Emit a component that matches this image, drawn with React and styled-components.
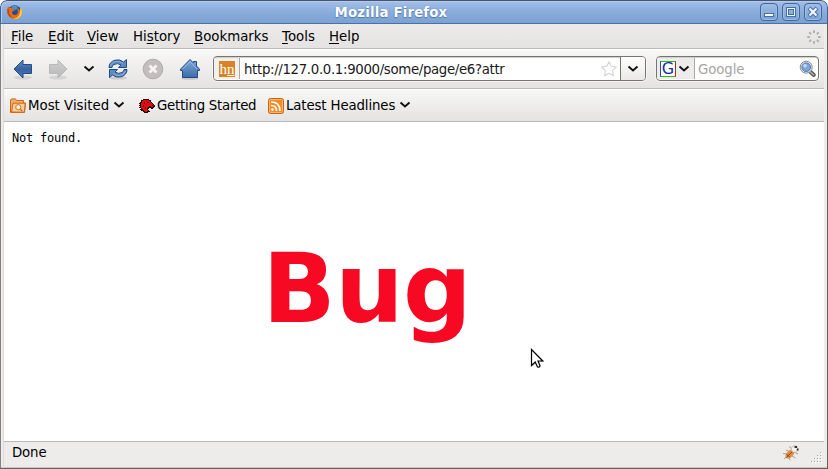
import React from 'react';
import styled, { createGlobalStyle } from 'styled-components';

const Global = createGlobalStyle`
  * { box-sizing: border-box; }
  html, body { margin: 0; background: #fff; overflow: hidden; }
  svg { display: block; flex: none; }
`;

const Frame = styled.div`
  position: relative;
  width: 828px;
  height: 469px;
  display: flex;
  flex-direction: column;
  overflow: hidden;
  border-radius: 7px 7px 0 0;
  background: #edeceb;
  font-family: "DejaVu Sans", sans-serif;
  font-size: 13.33px;
  color: #000;
`;

const TitleBar = styled.header`
  height: 24px;
  flex: none;
  display: flex;
  align-items: center;
  padding: 0 6px 0 5px;
  border: 1px solid #3f5f8d;
  border-top-color: #47566c;
  border-bottom-color: #4a70a8;
  border-radius: 7px 7px 0 0;
  background: linear-gradient(#a4c1e8, #96b5e2 25%, #88abd9 55%, #7ca2d2);
  box-shadow: inset 1px 1px 0 #b1caed;
`;

const Title = styled.h1`
  flex: 1;
  margin: 0;
  padding-top: 1px;
  padding-right: 1px;
  text-align: center;
  font-size: 13.33px;
  line-height: 22px;
  letter-spacing: 0.16px;
  color: #fff;
  text-shadow: 0 1px 1px #4e77b0, 0 0 1px #4e77b0;
`;

const WindowButtons = styled.div`
  display: flex;
  gap: 4px;
  margin-right: -1px;
`;

const WindowButton = styled.button`
  width: 18px;
  height: 18px;
  padding: 0;
  border: 1px solid #41689e;
  border-radius: 4px;
  background: linear-gradient(#9fbde6, #7ba1d2);
  box-shadow: inset 0 0 0 1px #a0bde4;
`;

const Body = styled.div`
  flex: 1;
  min-height: 0;
  display: flex;
  flex-direction: column;
  padding: 0 3px 0 2px;
  border: solid #65625e;
  border-width: 0 1px 1px 1px;
  border-left-color: #85827e;
  box-shadow: inset 0 -1px 0 #c9c6c3;
`;

const Inner = styled.div`
  flex: 1;
  min-height: 0;
  display: flex;
  flex-direction: column;
  border-left: 1px solid #dedcda;
`;

const Bar = styled.div`
  flex: none;
  display: flex;
  align-items: center;
  height: ${(p) => p.$h}px;
  border-bottom: 1px solid #bcbab8;
  background: linear-gradient(${(p) => p.$from || '#f8f8f7'}, #e4e3e1);
  box-shadow: inset 0 1px 0 ${(p) => p.$from || '#fff'};
`;

const MenuItem = styled.div`
  width: ${(p) => p.$w}px;
  flex: none;
  padding-top: 2px;
  line-height: 22px;
  white-space: nowrap;
  &:first-child { margin-left: 7px; }
`;

const Key = styled.span`
  text-decoration: underline;
  text-underline-offset: 2px;
  text-decoration-thickness: 1px;
  text-decoration-skip-ink: none;
`;

const Throbber = styled.div`
  margin-left: auto;
  margin-right: 2px;
  padding-top: 1px;
`;

const NavButton = styled.div`
  width: ${(p) => p.$w}px;
  flex: none;
  display: flex;
  justify-content: center;
`;

const Field = styled.div`
  height: 25px;
  width: ${(p) => p.$w}px;
  margin-left: ${(p) => p.$gap}px;
  flex: none;
  display: flex;
  align-items: center;
  overflow: hidden;
  border: 1px solid #777571;
  border-radius: 4px;
  background: #fff;
  box-shadow: 0 0 0 1px #f5f4f3, inset 0 1px 0 #d0cfcd;
`;

const FieldLead = styled.div`
  width: ${(p) => p.$w}px;
  height: 21px;
  flex: none;
  display: flex;
  align-items: center;
  border-right: 1px solid #aaa8a5;
  background: ${(p) => p.$bg || '#f1f0ef'};
  padding-left: ${(p) => p.$pad}px;
  gap: 2px;
`;

const FieldText = styled.div`
  flex: 1;
  padding-left: ${(p) => p.$pad}px;
  padding-top: 2px;
  color: ${(p) => p.$color};
  letter-spacing: ${(p) => p.$ls}px;
  line-height: 21px;
  white-space: nowrap;
`;

const DropButton = styled.div`
  width: 25px;
  height: 23px;
  margin-left: 2px;
  display: flex;
  align-items: center;
  justify-content: center;
  border-left: 1px solid #777571;
  background: linear-gradient(#fff, #eae9e7);
`;

const Favicon = styled.div`
  width: 16px;
  height: 16px;
  background: #d98324;
  color: #fff;
  font: 15px/16px "Liberation Serif", serif;
  text-align: center;
`;

const Bookmark = styled.div`
  display: flex;
  align-items: center;
  flex: none;
  width: ${(p) => p.$w}px;
  gap: 2px;
  white-space: nowrap;
  letter-spacing: ${(p) => p.$ls}px;
  &:first-child { margin-left: 6px; }
`;

const BookmarkIcon = styled.div`
  padding-top: ${(p) => p.$drop || 0}px;
`;

const BookmarkLabel = styled.span`
  margin-right: ${(p) => p.$end || 0}px;
`;

const Page = styled.main`
  position: relative;
  flex: 1;
  min-height: 0;
  background: #fff;
`;

const Message = styled.pre`
  margin: 0;
  padding: 9px 8px;
  font: 12px/14px "DejaVu Sans Mono", monospace;
  letter-spacing: -0.22px;
`;

const Annotation = styled.div`
  position: absolute;
  left: 258.5px;
  top: 110px;
  font-size: 96px;
  line-height: 114px;
  letter-spacing: -0.5px;
  font-weight: bold;
  color: #f70823;
`;

const Pointer = styled.svg`
  position: absolute;
  left: 526px;
  top: 226px;
`;

const Status = styled.footer`
  height: 27px;
  flex: none;
  display: flex;
  align-items: center;
  padding: 0 2px 4px 8px;
  border-top: 1px solid #bcbab8;
  line-height: 20px;
  letter-spacing: -0.15px;
`;

const Bug = styled.div`
  margin-left: auto;
  margin-right: 10px;
`;

const GripBox = styled.div`
  padding-top: 10px;
`;

const Chevron = () => (
  <svg width="12" height="8" viewBox="0 0 12 8">
    <path d="M1.5 1.5 L6 5.5 L10.5 1.5" fill="none" stroke="#111" strokeWidth="1.9" />
  </svg>
);

const FirefoxIcon = () => (
  <svg width="17" height="17" viewBox="0 0 17 17">
    <circle cx="8.5" cy="8" r="6.8" fill="#244d93" />
    <path d="M5 3 Q8 0 12 3 L10 6 L7 5Z" fill="#4b91d2" />
    <path d="M2 2 L4 4 Q6 3 7 5 L9 6 L6 8 Q6 11 9 11 Q12 11 12 7 L11 4 Q14 5 14 8 L14.5 3 Q18 9 14 13 Q10 17 5 14 Q-1 11 2 2Z" fill="#e66b16" />
    <path d="M14.5 3 Q18 9 14 13 Q11 16 7 15 Q13 14 14 8Z" fill="#ffcb3a" />
    <path d="M2 5 Q1 10 5 13" stroke="#a83218" fill="none" />
  </svg>
);

const ArrowIcon = ({ forward }) => (
  <svg width="22" height="24" viewBox="0 0 22 24">
    <defs>
      <linearGradient id="blueArrow" x2="0" y2="1"><stop stopColor="#6792c6" /><stop offset=".5" stopColor="#36629f" /><stop offset="1" stopColor="#4c7cb8" /></linearGradient>
      <linearGradient id="grayArrow" x2="0" y2="1"><stop stopColor="#d0d0cf" /><stop offset="1" stopColor="#b7b8b9" /></linearGradient>
    </defs>
    <ellipse cx="11" cy="20.5" rx="9" ry="2" fill="#000" opacity=".09" />
    <path
      transform={forward ? 'translate(22 0) scale(-1 1)' : undefined}
      d="M2 12 L11 3 V7.5 H19.5 V16.5 H11 V21Z"
      fill={forward ? 'url(#grayArrow)' : 'url(#blueArrow)'}
      stroke={forward ? '#b8b9ba' : '#234b85'}
      strokeLinejoin="round"
    />
  </svg>
);

const ReloadIcon = () => (
  <svg width="22" height="22" viewBox="0 0 22 22">
    <ellipse cx="11" cy="20" rx="9" ry="1.6" fill="#000" opacity=".12" />
    <g fill="#5c8bc1" stroke="#204a87" strokeWidth="1" strokeLinejoin="round">
      <path d="M2 9.5 Q2 4 8 2.2 Q13 1 16.5 4 L19.5 1.5 V9.5 H11.5 L14 7 Q10.5 4.5 7 6.5 Q5 7.5 5 9.5Z" />
      <path d="M20 11.5 Q20 17 14 18.8 Q9 20 5.5 17 L2.5 19.5 V11.5 H10.5 L8 14 Q11.5 16.5 15 14.5 Q17 13.5 17 11.5Z" />
    </g>
    <path d="M3.5 8 Q5 3.5 10 3.3 Q13 3 16 5.5 M18.5 13 Q17 17.3 12 17.7 Q9 18 6 15.5" fill="none" stroke="#a6c3e2" strokeWidth=".7" />
  </svg>
);

const StopIcon = () => (
  <svg width="22" height="22" viewBox="0 0 22 22">
    <circle cx="11" cy="11" r="9.8" fill="#c3bebd" stroke="#afabaa" />
    <path d="M7.5 7.5 L14.5 14.5 M14.5 7.5 L7.5 14.5" stroke="#f6f5f4" strokeWidth="2.7" />
  </svg>
);

const HomeIcon = () => (
  <svg width="22" height="22" viewBox="0 0 22 22">
    <defs><linearGradient id="house" x2="0" y2="1"><stop stopColor="#82a8d5" /><stop offset="1" stopColor="#3c6da9" /></linearGradient></defs>
    <ellipse cx="11" cy="20.5" rx="9" ry="1.3" fill="#000" opacity=".14" />
    <path d="M11 1.5 L14.5 5 V3.5 H17.5 V8 L20.5 11.2 V12.5 H18.5 V19.5 H3.5 V12.5 H1.5 V11.2Z" fill="url(#house)" stroke="#204a87" strokeLinejoin="round" />
    <path d="M3.5 11.2 L11 3.5 L18 11" fill="none" stroke="#a8c6e7" opacity=".8" />
  </svg>
);

const StarIcon = () => (
  <svg width="18" height="18" viewBox="0 0 18 18">
    <path d="M9 1.8 L11.2 6.3 L16.3 7.1 L12.6 10.6 L13.5 15.8 L9 13.3 L4.5 15.8 L5.4 10.6 L1.7 7.1 L6.8 6.3Z" fill="#fff" stroke="#d6d4d2" strokeWidth="1.1" strokeLinejoin="round" />
  </svg>
);

const GoogleBox = styled.div`
  width: 16px;
  height: 16px;
  border: 1px solid;
  border-color: #36b51f #c62020 #36b51f #1552cc;
  background: #fff;
  color: #1432a0;
  font: 16px/14px "DejaVu Sans", sans-serif;
  display: flex;
  justify-content: center;
`;

const SearchIcon = () => (
  <svg width="19" height="18" viewBox="0 0 19 18">
    <path d="M10.5 11 L14.8 15" stroke="#555753" strokeWidth="4" strokeLinecap="round" />
    <path d="M11 11.5 L14.5 14.8" stroke="#a7a9a5" strokeWidth="1.6" strokeLinecap="round" />
    <circle cx="7.2" cy="7.2" r="6" fill="#e7e7e6" stroke="#8a8c89" />
    <circle cx="7.2" cy="7.2" r="4.3" fill="#7ba8dc" stroke="#4678b5" />
    <circle cx="6" cy="5.8" r="1.8" fill="#c5dbf3" />
  </svg>
);

const FolderIcon = () => (
  <svg width="16" height="16" viewBox="0 0 16 16">
    <path d="M.5 14.5 V2 L1.5 .9 H5.5 L6.5 2.5 H13.5 V5 H15.5 L14.5 14.5Z" fill="#eeb06b" stroke="#d26716" />
    <path d="M1.5 14 L3 5.2 H15.2 L14.3 14.2Z" fill="#f7d1a1" stroke="#d26716" />
    <circle cx="8.3" cy="9.2" r="2.6" fill="#fff0d7" stroke="#cf721f" />
    <path d="M10.3 11.2 L12.5 13.2" stroke="#cf721f" strokeWidth="1.4" />
  </svg>
);

const DinoIcon = () => (
  <svg width="16" height="14" viewBox="0 0 16 14" shapeRendering="crispEdges">
    <path d="M4 0 H10 V1 H12 V3 H13 V4 H14 V5 H15 V6 H16 V8 H15 V9 H14 V10 H12 V9 H10 V10 H9 V11 H10 V12 H11 V13 H9 V14 H5 V13 H4 V12 H2 V11 H1 V10 H2 V9 H0 V8 H1 V7 H0 V6 H1 V5 H0 V4 H1 V3 H2 V1 H4Z" fill="#181010" />
    <path d="M4 1 H10 V2 H11 V3 H12 V4 H13 V5 H14 V6 H15 V7 H14 V8 H12 V7 H10 V8 H9 V9 H8 V11 H9 V12 H8 V13 H6 V12 H5 V11 H4 V10 H3 V9 H2 V4 H3 V2 H4Z" fill="#e50b0b" />
    <path d="M8 3 H10 V4 H8Z M5 3 H6 V5 H5Z M4 6 H5 V8 H4Z M6 8 H7 V10 H6Z M13 6 H14 V7 H13Z" fill="#500" />
  </svg>
);

const FeedIcon = () => (
  <svg width="16" height="16" viewBox="0 0 16 16">
    <rect x=".5" y=".5" width="15" height="15" rx="2" fill="#f38b28" stroke="#cf5e10" />
    <rect x="1.5" y="1.5" width="13" height="13" rx="1" fill="none" stroke="#f9ba74" />
    <circle cx="4.4" cy="11.6" r="1.3" fill="#fff" />
    <path d="M3 7.5 Q8.5 7.5 8.5 13 M3 4 Q12 4 12 13" stroke="#fff" strokeWidth="1.7" fill="none" />
  </svg>
);

const BeetleIcon = () => (
  <svg width="17" height="17" viewBox="0 0 17 17">
    <path d="M0 8.5 L4 9 M3 5 L7 7 M6 1.5 L9 4 M9 11 L12.5 13 M6.5 12 L7 15.5 M3 12 L1 14 M11 7 L15 9" stroke="#a3a099" fill="none" />
    <ellipse cx="7" cy="9" rx="3.3" ry="5.6" transform="rotate(45 7 9)" fill="#e58d43" />
    <path d="M3.5 12.3 L9.5 6.5 M3.8 9.2 L6.8 12.2" stroke="#7b4218" strokeWidth=".9" />
    <circle cx="11.7" cy="4" r="3.3" fill="#f7f4ef" stroke="#b9b4ad" strokeWidth=".7" />
    <path d="M11.5 1 H14 V3 H11.5Z M14 3.5 H15.5 V5.5 H13.5Z" fill="#303030" />
  </svg>
);

const Grip = () => (
  <svg width="12" height="12" viewBox="0 0 12 12">
    {[0, 1, 2, 3].flatMap((r) =>
      Array.from({ length: r + 1 }, (_, i) => (
        <g key={`${r}-${i}`}>
          <rect x={10 - i * 3} y={r * 3} width="1" height="1" fill="#aaa7a3" />
          <rect x={11 - i * 3} y={r * 3 + 1} width="1" height="1" fill="#fff" />
        </g>
      ))
    )}
  </svg>
);

const menus = [
  ['', 'F', 'ile', 37],
  ['', 'E', 'dit', 39],
  ['', 'V', 'iew', 46],
  ['Hi', 's', 'tory', 61],
  ['', 'B', 'ookmarks', 88],
  ['', 'T', 'ools', 47],
  ['', 'H', 'elp', 40],
];

export default function App() {
  return (
    <>
      <Global />
      <Frame>
        <TitleBar>
          <FirefoxIcon />
          <Title>Mozilla Firefox</Title>
          <WindowButtons>
            <WindowButton aria-label="Minimize">
              <svg width="16" height="16"><rect x="3.5" y="9.5" width="9" height="3" fill="#fff" stroke="#456ea5" /></svg>
            </WindowButton>
            <WindowButton aria-label="Maximize">
              <svg width="16" height="16"><rect x="4.5" y="4.5" width="7" height="7" fill="none" stroke="#456ea5" strokeWidth="3" /><rect x="4.5" y="4.5" width="7" height="7" fill="none" stroke="#edf4ff" /></svg>
            </WindowButton>
            <WindowButton aria-label="Close">
              <svg width="16" height="16"><path d="M4 4 L12 12 M12 4 L4 12" stroke="#456ea5" strokeWidth="4" /><path d="M4.5 4.5 L11.5 11.5 M11.5 4.5 L4.5 11.5" stroke="#f4f8ff" strokeWidth="2.2" /></svg>
            </WindowButton>
          </WindowButtons>
        </TitleBar>
        <Body>
          <Inner>
            <Bar $h={25} $from="#ecebea">
              {menus.map(([before, key, after, width]) => (
                <MenuItem key={key} $w={width}>{before}<Key>{key}</Key>{after}</MenuItem>
              ))}
              <Throbber>
                <svg width="16" height="16" viewBox="0 0 16 16">
                  {[0, 45, 90, 135, 180, 225, 270, 315].map((a) => (
                    <rect key={a} x="7" y="1.2" width="2" height="2.8" rx=".6" fill="#b3b1af" transform={`rotate(${a} 8 8)`} />
                  ))}
                </svg>
              </Throbber>
            </Bar>
            <Bar $h={40}>
              <NavButton $w={38}><ArrowIcon /></NavButton>
              <NavButton $w={32}><ArrowIcon forward /></NavButton>
              <NavButton $w={30}><Chevron /></NavButton>
              <NavButton $w={28}><ReloadIcon /></NavButton>
              <NavButton $w={42}><StopIcon /></NavButton>
              <NavButton $w={31}><HomeIcon /></NavButton>
              <Field $w={433} $gap={8}>
                <FieldLead $w={26} $pad={5}>
                  <Favicon>h<u>n</u></Favicon>
                </FieldLead>
                <FieldText $pad={4} $color="#1a1a1a" $ls={-0.34}>http://127.0.0.1:9000/some/page/e6?attr</FieldText>
                <StarIcon />
                <DropButton><Chevron /></DropButton>
              </Field>
              <Field $w={163} $gap={10}>
                <FieldLead $w={38} $pad={3} $bg="#edeceb"><GoogleBox>G</GoogleBox><Chevron /></FieldLead>
                <FieldText $pad={3} $color="#a7a5a2" $ls={-0.1}>Google</FieldText>
                <SearchIcon />
              </Field>
            </Bar>
            <Bar $h={33}>
              <Bookmark $w={129} $ls={0}><BookmarkIcon $drop={2}><FolderIcon /></BookmarkIcon><BookmarkLabel $end={2}>Most Visited</BookmarkLabel><Chevron /></Bookmark>
              <Bookmark $w={129} $ls={-0.25}><BookmarkIcon $drop={2}><DinoIcon /></BookmarkIcon><BookmarkLabel>Getting Started</BookmarkLabel></Bookmark>
              <Bookmark $w={150} $ls={-0.13}><BookmarkIcon $drop={2}><FeedIcon /></BookmarkIcon><BookmarkLabel $end={2}>Latest Headlines</BookmarkLabel><Chevron /></Bookmark>
            </Bar>
            <Page>
              <Message>Not found.</Message>
              <Annotation>Bug</Annotation>
              <Pointer width="16" height="23" viewBox="0 0 16 23">
                <path d="M1.5 1.5 V17.5 L5.2 14 L7.5 19 Q9.5 19.5 10 17.8 L8 13 H12.8Z" transform="translate(1 1)" fill="#000" opacity=".18" />
                <path d="M1.5 1.5 V17.5 L5.2 14 L7.5 19 Q9.5 19.5 10 17.8 L8 13 H12.8Z" fill="#fff" stroke="#000" strokeWidth="1.2" />
              </Pointer>
            </Page>
            <Status>
              <span>Done</span>
              <Bug><BeetleIcon /></Bug>
              <GripBox><Grip /></GripBox>
            </Status>
          </Inner>
        </Body>
      </Frame>
    </>
  );
}
